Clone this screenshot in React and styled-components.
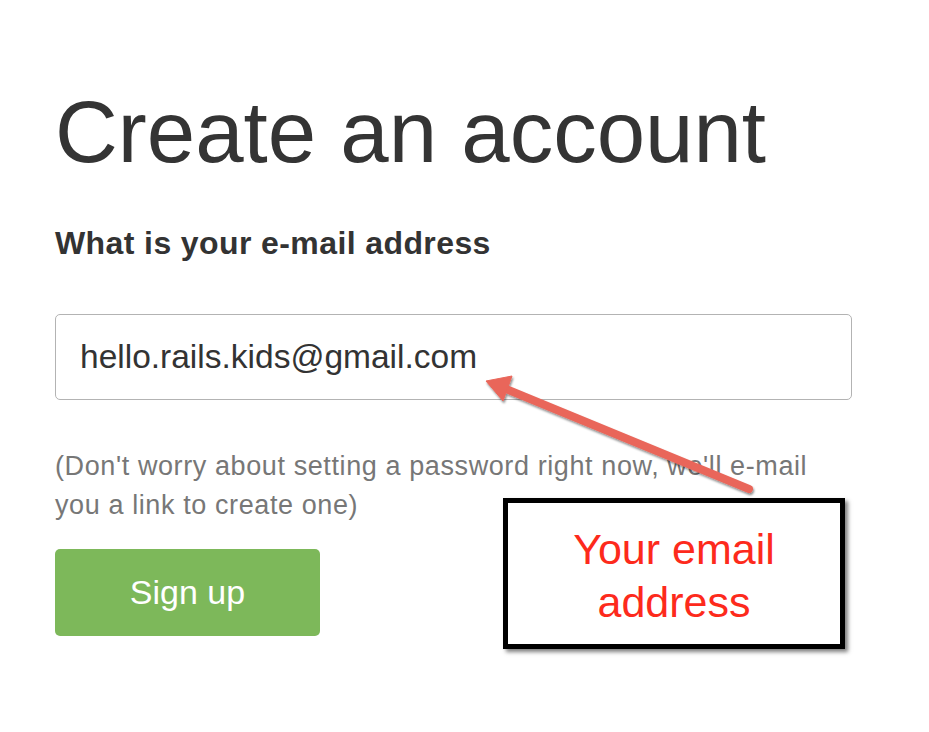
import React from "react";
import styled, { createGlobalStyle } from "styled-components";

const GlobalStyle = createGlobalStyle`
  body {
    margin: 0;
    background: #fff;
    font-family: "Liberation Sans", Arial, sans-serif;
  }
`;

export default function App() {
  return (
    <>
      <GlobalStyle />
      <Page>
        <Form>
          <Title>Create an account</Title>
          <Label htmlFor="email">What is your e-mail address</Label>
          <EmailInput
            id="email"
            type="email"
            defaultValue="hello.rails.kids@gmail.com"
          />
          <Hint>
            (Don't worry about setting a password right now, we'll e-mail you a
            link to create one)
          </Hint>
          <SignUpButton type="button">Sign up</SignUpButton>
        </Form>

        <Arrow viewBox="0 0 929 732">
          <defs>
            <filter id="arrowShadow" x="-10%" y="-10%" width="120%" height="130%">
              <feDropShadow dx="1" dy="2" stdDeviation="1.2" floodColor="#000" floodOpacity="0.45" />
            </filter>
          </defs>
          <g filter="url(#arrowShadow)" fill="#e9665a" stroke="#e9665a">
            <line x1="506" y1="389" x2="749" y2="489" strokeWidth="8" strokeLinecap="round" />
            <polygon points="486,381 512,376 503,401" strokeWidth="1" strokeLinejoin="round" />
          </g>
        </Arrow>

        <Callout>
          Your email
          <br />
          address
        </Callout>
      </Page>
    </>
  );
}

const Page = styled.div`
  position: relative;
  width: 929px;
  height: 732px;
  overflow: hidden;
  background: #fff;
`;

const Form = styled.div`
  display: flex;
  flex-direction: column;
  align-items: flex-start;
  padding: 88px 0 0 55px;
`;

const Title = styled.h1`
  margin: 0;
  font-size: 87px;
  line-height: 87px;
  font-weight: 400;
  color: #343434;
  white-space: nowrap;
`;

const Label = styled.label`
  margin-top: 52px;
  font-size: 32px;
  line-height: 32px;
  font-weight: 700;
  letter-spacing: 0.4px;
  color: #333;
`;

const EmailInput = styled.input`
  box-sizing: border-box;
  margin-top: 55px;
  width: 797px;
  height: 86px;
  padding: 0 24px;
  border: 1.5px solid #b3b3b3;
  border-radius: 5px;
  font-family: "Liberation Sans", Arial, sans-serif;
  font-size: 33.5px;
  color: #333;
  background: #fff;
  outline: none;
`;

const Hint = styled.p`
  margin: 47px 0 0;
  max-width: 790px;
  font-size: 27px;
  line-height: 39px;
  letter-spacing: 0.6px;
  color: #777;
`;

const SignUpButton = styled.button`
  margin-top: 24px;
  width: 265px;
  height: 87px;
  border: none;
  border-radius: 5px;
  background: #7db85a;
  color: #fff;
  font-family: "Liberation Sans", Arial, sans-serif;
  font-size: 34px;
  cursor: pointer;
`;

const Arrow = styled.svg`
  position: absolute;
  left: 0;
  top: 0;
  width: 929px;
  height: 732px;
  pointer-events: none;
`;

const Callout = styled.div`
  position: absolute;
  left: 503px;
  top: 498px;
  box-sizing: border-box;
  width: 342px;
  height: 151px;
  padding-top: 20px;
  border: 5px solid #000;
  background: #fff;
  box-shadow: 3px 3px 4px rgba(0, 0, 0, 0.5);
  text-align: center;
  font-size: 43px;
  line-height: 53px;
  color: #fd2a1c;
`;
